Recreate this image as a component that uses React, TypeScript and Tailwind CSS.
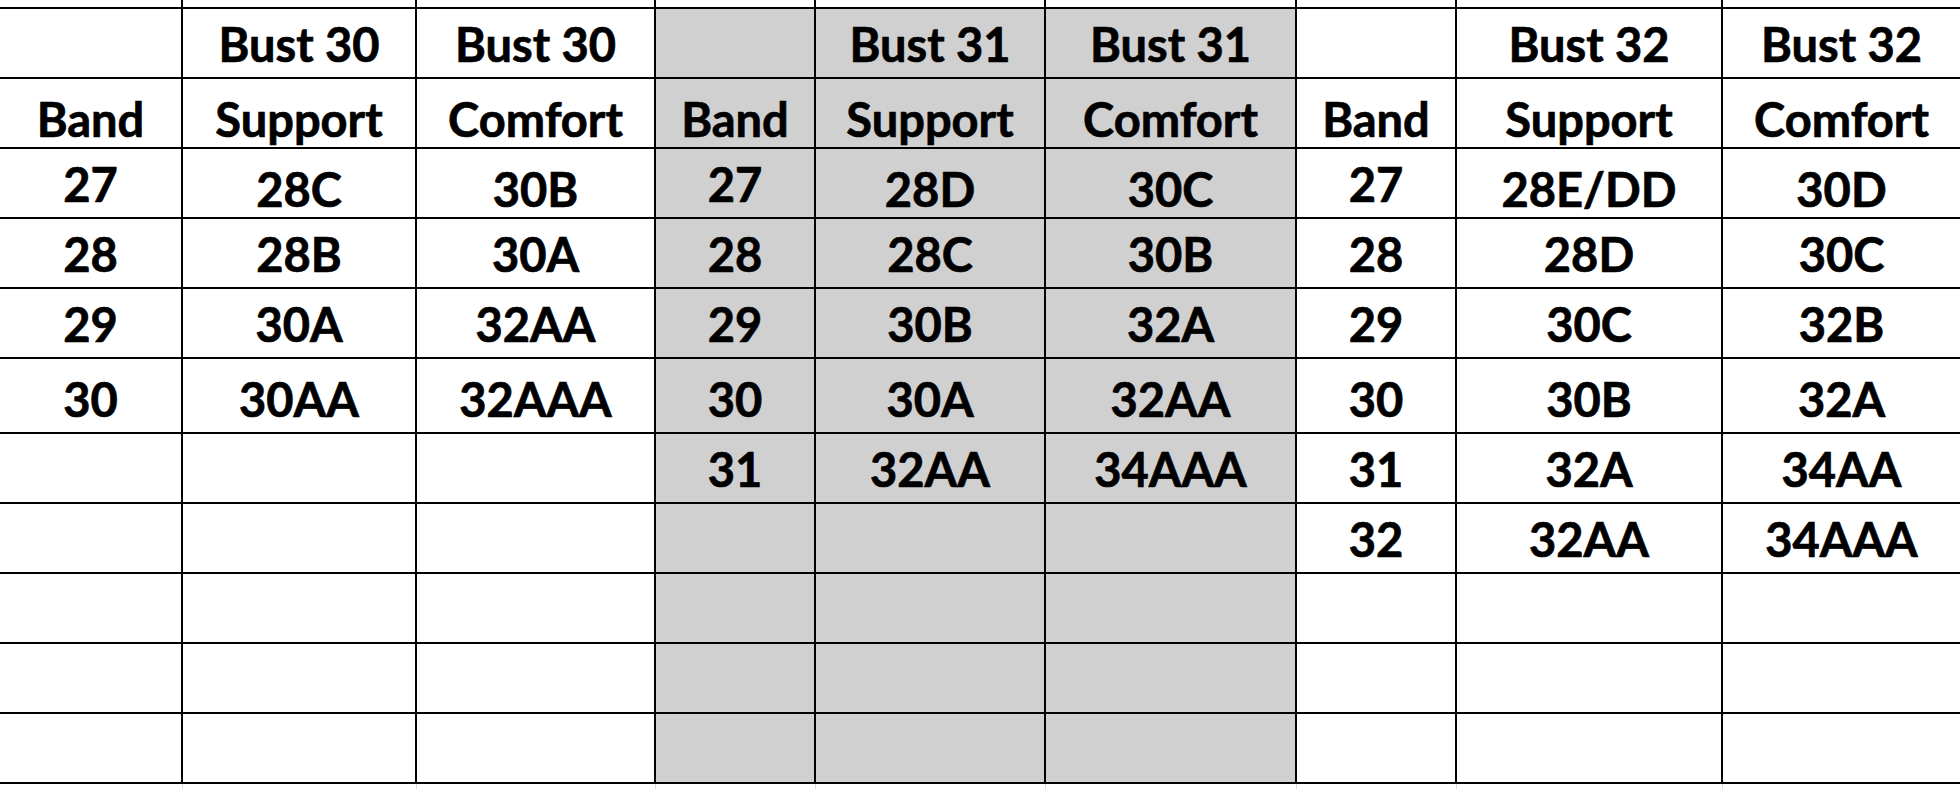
import React from "react";

const COLS = 9;
const gray = new Set([3, 4, 5]);

const sections = [
  {
    bust: "Bust 30",
    band: ["27", "28", "29", "30"],
    support: ["28C", "28B", "30A", "30AA"],
    comfort: ["30B", "30A", "32AA", "32AAA"],
  },
  {
    bust: "Bust 31",
    band: ["27", "28", "29", "30", "31"],
    support: ["28D", "28C", "30B", "30A", "32AA"],
    comfort: ["30C", "30B", "32A", "32AA", "34AAA"],
  },
  {
    bust: "Bust 32",
    band: ["27", "28", "29", "30", "31", "32"],
    support: ["28E/DD", "28D", "30C", "30B", "32A", "32AA"],
    comfort: ["30D", "30C", "32B", "32A", "34AA", "34AAA"],
  },
];

function buildRows(): string[][] {
  const rows: string[][] = [];
  const h1: string[] = [];
  const h2: string[] = [];
  sections.forEach((s) => {
    h1.push("", s.bust, s.bust);
    h2.push("Band", "Support", "Comfort");
  });
  rows.push(h1, h2);
  for (let r = 0; r < 9; r++) {
    const row: string[] = [];
    sections.forEach((s) => {
      row.push(s.band[r] ?? "", s.support[r] ?? "", s.comfort[r] ?? "");
    });
    rows.push(row);
  }
  return rows;
}

export default function App() {
  const rows = buildRows();
  return (
    <div
      className="grid w-[1960px] h-[789px] overflow-hidden bg-white text-black grid-cols-[183px_234px_239px_160px_230px_251px_160px_266px_237px] grid-rows-[9px_70px_70px_70px_70px_70px_75px_70px_70px_70px_70px_70px_5px]"
      style={{ fontFamily: "Lato, 'Noto Sans', sans-serif" }}
    >
      {Array.from({ length: COLS }).map((_, c) => (
        <div
          key={`top-${c}`}
          className={`border-b-2 border-black ${c < COLS - 1 ? "border-r-2" : ""}`}
        />
      ))}
      {rows.map((row, r) =>
        row.map((txt, c) => {
          const raised = r === 1 || (r === 2 && c % 3 !== 0);
          return (
            <div
              key={`${r}-${c}`}
              className={`flex items-end justify-center border-b-2 border-black text-[47px] font-bold leading-none whitespace-nowrap [-webkit-text-stroke:0.7px_black] ${
                c < COLS - 1 ? "border-r-2" : ""
              } ${gray.has(c) ? "bg-[#d0d0d0]" : "bg-white"} ${
                raised ? "pb-[4px]" : "pb-[9px]"
              }`}
            >
              {txt}
            </div>
          );
        })
      )}
      {Array.from({ length: COLS }).map((_, c) => (
        <div
          key={`bot-${c}`}
          className={`${c < COLS - 1 ? "border-r border-[#d9d9d9]" : ""}`}
        />
      ))}
    </div>
  );
}
